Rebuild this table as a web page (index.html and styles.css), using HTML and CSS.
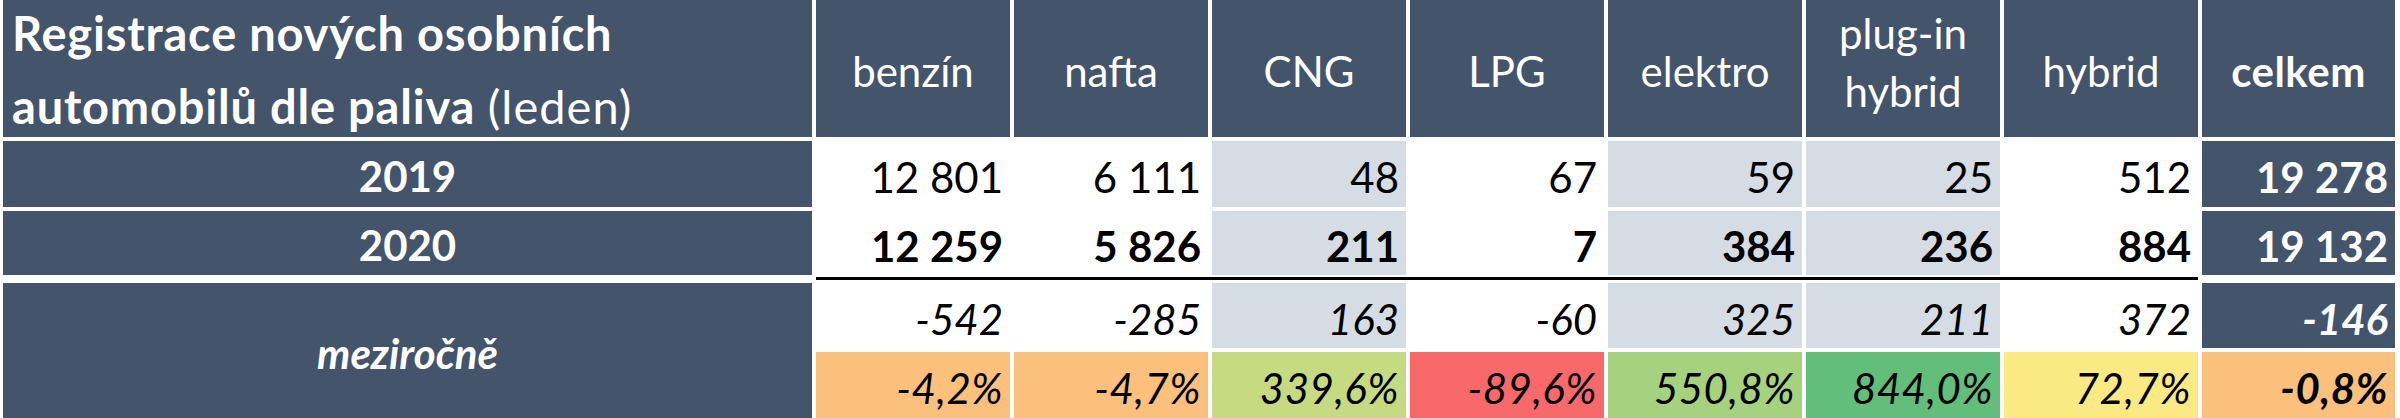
FILE: index.html
```html
<!DOCTYPE html>
<html lang="cs">
<head>
    <meta charset="UTF-8">
    <meta name="viewport" content="width=device-width, initial-scale=1.0">
    <title>Registrace nových osobních automobilů dle paliva</title>
    <link rel="stylesheet" href="styles.css">
</head>
<body>
    <div class="sheet">
        <!-- hlavička -->
        <div class="cell head title">
            <span><b>Registrace nových osobních</b><br><b>automobilů dle paliva</b> <span class="month">(leden)</span></span>
        </div>
        <div class="cell head">benzín</div>
        <div class="cell head">nafta</div>
        <div class="cell head">CNG</div>
        <div class="cell head">LPG</div>
        <div class="cell head">elektro</div>
        <div class="cell head two">plug-in<br>hybrid</div>
        <div class="cell head">hybrid</div>
        <div class="cell head total-head">celkem</div>

        <!-- 2019 -->
        <div class="cell year">2019</div>
        <div class="cell num">12&nbsp;801</div>
        <div class="cell num">6&nbsp;111</div>
        <div class="cell num alt">48</div>
        <div class="cell num">67</div>
        <div class="cell num alt">59</div>
        <div class="cell num alt">25</div>
        <div class="cell num">512</div>
        <div class="cell num total">19&nbsp;278</div>

        <!-- 2020 -->
        <div class="cell year">2020</div>
        <div class="cell num strong">12&nbsp;259</div>
        <div class="cell num strong">5&nbsp;826</div>
        <div class="cell num strong alt">211</div>
        <div class="cell num strong">7</div>
        <div class="cell num strong alt">384</div>
        <div class="cell num strong alt">236</div>
        <div class="cell num strong">884</div>
        <div class="cell num total">19&nbsp;132</div>

        <div class="rule"></div>

        <!-- meziročně -->
        <div class="cell year diff-label">meziročně</div>
        <div class="cell num diff first">-542</div>
        <div class="cell num diff">-285</div>
        <div class="cell num diff alt">163</div>
        <div class="cell num diff">-60</div>
        <div class="cell num diff alt">325</div>
        <div class="cell num diff alt">211</div>
        <div class="cell num diff">372</div>
        <div class="cell num diff total">-146</div>

        <div class="cell num diff pct first" style="background-color: #fac07c">-4,2%</div>
        <div class="cell num diff pct" style="background-color: #fac07c">-4,7%</div>
        <div class="cell num diff pct" style="background-color: #c6db81">339,6%</div>
        <div class="cell num diff pct" style="background-color: #f8696b">-89,6%</div>
        <div class="cell num diff pct" style="background-color: #a6d17e">550,8%</div>
        <div class="cell num diff pct" style="background-color: #63be7b">844,0%</div>
        <div class="cell num diff pct" style="background-color: #fbe983">72,7%</div>
        <div class="cell num diff pct strong" style="background-color: #fac07c">-0,8%</div>
    </div>
</body>
</html>
```

FILE: styles.css
```css
body {
    margin: 0;
    background-color: #fff;
    font-family: Lato, "Open Sans", sans-serif;
    color: #000;
}
.sheet {
    display: grid;
    grid-template-columns: 809px repeat(7, 194px) 193px;
    grid-template-rows: 137px 66px 64px 0 65px 66px;
    gap: 4px;
    padding-left: 3px;
    font-size: 42px;
}
.cell {
    display: flex;
    align-items: center;
    background-color: #fff;
    white-space: nowrap;
}
.head {
    justify-content: center;
    background-color: #44546a;
    color: #fff;
    padding-top: 4px;
}
.head.title {
    justify-content: flex-start;
    font-size: 47px;
    line-height: 73px;
    letter-spacing: 0.6px;
    padding: 2px 0 0 9px;
}
.head.title b {
    letter-spacing: 0.8px;
}
.month {
    letter-spacing: 1px;
}
.head.two {
    line-height: 58px;
    padding: 0 0 14px;
    text-align: center;
}
.total-head {
    font-weight: bold;
    letter-spacing: 0.5px;
}
.year {
    justify-content: center;
    background-color: #44546a;
    color: #fff;
    font-weight: bold;
    padding-top: 4px;
}
.diff-label {
    grid-column: 1;
    grid-row: 5 / 7;
    font-style: italic;
}
.num {
    justify-content: flex-end;
    padding: 6px 7px 0 0;
}
.first {
    grid-column: 2;
}
.alt {
    background-color: #d6dce4;
}
.strong {
    font-weight: bold;
}
.diff {
    font-style: italic;
}
.pct {
    letter-spacing: 0.5px;
}
.total {
    background-color: #44546a;
    color: #fff;
    font-weight: bold;
}
.rule {
    grid-column: 2 / 9;
    grid-row: 4;
    height: 3px;
    margin-top: -2px;
    background-color: #000;
}
```
